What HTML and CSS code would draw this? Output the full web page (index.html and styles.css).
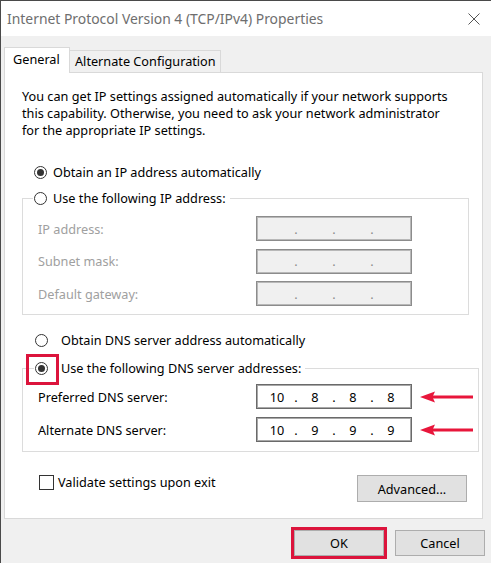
FILE: index.html
```html
<!DOCTYPE html>
<html lang="en">
<head>
  <meta charset="UTF-8" />
  <title>Internet Protocol Version 4 (TCP/IPv4) Properties</title>
  <link rel="stylesheet" href="styles.css">
</head>
<body>

  <div class="window">
    <div class="titlebar">
      <span class="title">Internet Protocol Version 4 (TCP/IPv4) Properties</span>
      <svg class="close" width="12" height="12" viewBox="0 0 12 12">
        <path d="M0.5 0.5L11.5 11.5M11.5 0.5L0.5 11.5" stroke="#555" stroke-width="1" fill="none" />
      </svg>
    </div>

    <div class="tabs">
      <div class="tab active">General</div>
      <div class="tab alt">Alternate Configuration</div>
    </div>

    <div class="panel">
      <p class="intro">
        You can get IP settings assigned automatically if your network supports<br>
        this capability. Otherwise, you need to ask your network administrator<br>
        for the appropriate IP settings.
      </p>

      <div class="option ip-auto"><span class="radio on"></span>Obtain an IP address automatically</div>

      <fieldset class="group ip-group">
        <legend><div class="option"><span class="radio"></span>Use the following IP address:</div></legend>
        <div class="row disabled">
          <span class="row-label">IP address:</span>
          <div class="ip-field"><span class="seg"></span><span class="dot">.</span><span class="seg"></span><span class="dot">.</span><span class="seg"></span><span class="dot">.</span><span class="seg"></span></div>
        </div>
        <div class="row disabled">
          <span class="row-label">Subnet mask:</span>
          <div class="ip-field"><span class="seg"></span><span class="dot">.</span><span class="seg"></span><span class="dot">.</span><span class="seg"></span><span class="dot">.</span><span class="seg"></span></div>
        </div>
        <div class="row disabled">
          <span class="row-label">Default gateway:</span>
          <div class="ip-field"><span class="seg"></span><span class="dot">.</span><span class="seg"></span><span class="dot">.</span><span class="seg"></span><span class="dot">.</span><span class="seg"></span></div>
        </div>
      </fieldset>

      <div class="option dns-auto"><span class="radio"></span>Obtain DNS server address automatically</div>

      <fieldset class="group dns-group">
        <legend><div class="option"><span class="radio on marked"></span>Use the following DNS server addresses:</div></legend>
        <div class="row">
          <span class="row-label">Preferred DNS server:</span>
          <div class="ip-field"><span class="seg">10</span><span class="dot">.</span><span class="seg">8</span><span class="dot">.</span><span class="seg">8</span><span class="dot">.</span><span class="seg">8</span></div>
          <div class="arrow">
            <svg width="60" height="26" viewBox="0 0 60 26">
              <polygon points="2,13 17,7.5 14.5,13 17,18.5" fill="#e8163b" />
              <rect x="14" y="11.5" width="41" height="3" fill="#e8163b" />
            </svg>
          </div>
        </div>
        <div class="row">
          <span class="row-label">Alternate DNS server:</span>
          <div class="ip-field"><span class="seg">10</span><span class="dot">.</span><span class="seg">9</span><span class="dot">.</span><span class="seg">9</span><span class="dot">.</span><span class="seg">9</span></div>
          <div class="arrow">
            <svg width="60" height="26" viewBox="0 0 60 26">
              <polygon points="2,13 17,7.5 14.5,13 17,18.5" fill="#e8163b" />
              <rect x="14" y="11.5" width="41" height="3" fill="#e8163b" />
            </svg>
          </div>
        </div>
      </fieldset>

      <div class="bottom-row">
        <div class="check-option"><span class="checkbox"></span>Validate settings upon exit</div>
        <button class="btn advanced">Advanced...</button>
      </div>
    </div>

    <div class="footer">
      <button class="btn ok">OK</button>
      <button class="btn">Cancel</button>
    </div>
  </div>

</body>
</html>
```

FILE: styles.css
```css
body {
  margin: 0;
  padding: 0;
  overflow: hidden;
}

.window {
  width: 491px;
  height: 563px;
  box-sizing: border-box;
  border-left: 1px solid #4a4a4a;
  border-top: 1px solid #4a4a4a;
  background-color: #f0f0f0;
  font-family: 'Noto Sans', 'Open Sans', sans-serif;
  font-size: 12.7px;
  color: #000;
}

/* title bar */
.titlebar {
  height: 35px;
  background-color: #fff;
  display: flex;
  align-items: center;
  justify-content: space-between;
  padding: 0 11px 0 6px;
}

.title {
  color: #6e6e6e;
  font-size: 13.9px;
}

/* tabs */
.tabs {
  display: flex;
  align-items: flex-end;
  height: 26px;
  margin: 11px 0 0 3px;
}

.tab {
  box-sizing: border-box;
  border: 1px solid #d9d9d9;
  border-bottom: 0;
  white-space: nowrap;
}

.tab.active {
  width: 66px;
  height: 26px;
  padding-left: 8px;
  line-height: 22px;
  background-color: #fff;
  position: relative;
  z-index: 1;
}

.tab.alt {
  height: 22px;
  margin-bottom: 1px;
  border-left: 0;
  padding: 0 4px 0 5px;
  line-height: 20px;
}

.panel {
  box-sizing: border-box;
  width: 479px;
  height: 447px;
  margin: -1px 0 0 3px;
  padding-left: 17px;
  background-color: #fff;
  border: 1px solid #d9d9d9;
}

.intro {
  margin: 15px 0 0;
  line-height: 17px;
}

/* radios */
.option {
  display: flex;
  align-items: center;
  height: 18px;
  gap: 6px;
  white-space: nowrap;
}

.radio {
  position: relative;
  width: 13px;
  height: 13px;
  box-sizing: border-box;
  border: 1px solid #333;
  border-radius: 50%;
  display: flex;
  align-items: center;
  justify-content: center;
  flex-shrink: 0;
}

.radio.on::after {
  content: '';
  width: 7px;
  height: 7px;
  border-radius: 50%;
  background-color: #333;
}

.radio.marked::before {
  content: '';
  position: absolute;
  left: -10px;
  top: -9px;
  width: 27px;
  height: 25px;
  border: 3px solid #dc143c;
}

.ip-auto {
  margin: 24px 0 0 12px;
}

.dns-auto {
  margin: 16px 0 0 13px;
  gap: 13px;
}

/* group boxes */
.group {
  box-sizing: border-box;
  width: 447px;
  margin: 8px 0 0;
  padding: 0 0 8px 15px;
  border: 1px solid #dcdcdc;
  display: flex;
  flex-direction: column;
}

.group legend {
  margin-left: -5px;
  padding: 0 4px 0 1px;
}

.ip-group .row:first-of-type {
  margin-top: 9px;
}

.ip-group {
  gap: 7.5px;
}

.dns-group {
  margin-top: 10px;
  padding-bottom: 9px;
  gap: 8px;
}

.dns-group legend {
  margin-left: -4px;
}

.dns-group legend .option {
  gap: 13px;
}

.dns-group .row:first-of-type {
  margin-top: 7px;
}

.row {
  display: flex;
  align-items: center;
  height: 25px;
}

.row-label {
  width: 218px;
  flex-shrink: 0;
}

.row.disabled .row-label {
  color: #a0a0a0;
}

.ip-field {
  box-sizing: border-box;
  width: 156px;
  height: 25px;
  flex-shrink: 0;
  display: flex;
  align-items: center;
  padding: 0 4px;
  background-color: #fff;
  border: 1px solid #6a6a6a;
  box-shadow: inset 0 0 0 1px #a8a8a8;
}

.row.disabled .ip-field {
  background-color: #f0f0f0;
  border-color: #8c8c8c;
  box-shadow: inset 0 0 0 1px #b8b8b8;
}

.seg {
  flex: 1;
  text-align: center;
}

.dot {
  width: 6px;
  text-align: center;
}

.row.disabled .dot {
  color: #8c8c8c;
}

.arrow {
  width: 60px;
  height: 26px;
  margin-left: 6px;
  flex-shrink: 0;
  background-color: #fff;
}

.arrow svg {
  display: block;
}

/* bottom */
.bottom-row {
  display: flex;
  justify-content: space-between;
  align-items: flex-start;
  margin: 21px 15px 0 17px;
}

.check-option {
  display: flex;
  align-items: center;
  height: 18px;
  gap: 4px;
}

.checkbox {
  width: 15px;
  height: 15px;
  box-sizing: border-box;
  border: 1px solid #333;
  background-color: #fff;
}

.btn {
  box-sizing: border-box;
  height: 26px;
  width: 90px;
  padding: 0;
  background-color: #e1e1e1;
  border: 1px solid #adadad;
  font-family: 'Noto Sans', 'Open Sans', sans-serif;
  font-size: 12.7px;
  color: #000;
}

.btn.advanced {
  width: 110px;
  height: 27px;
  margin-top: 2px;
}

.footer {
  display: flex;
  justify-content: flex-end;
  gap: 11px;
  margin-top: 11px;
  padding-right: 6px;
}

.btn.ok {
  outline: 3px solid #dc143c;
}
```
